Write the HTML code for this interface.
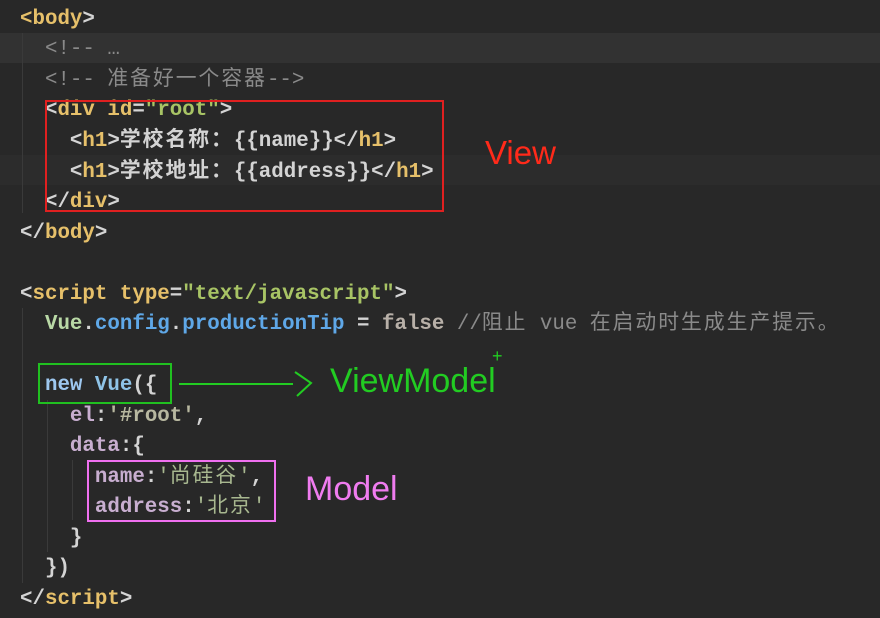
<!DOCTYPE html>
<html><head><meta charset="utf-8"><style>
html,body{margin:0;padding:0;background:#282828;width:880px;height:618px;overflow:hidden;position:relative}
.l{position:absolute;left:20px;height:30px;line-height:30px;white-space:pre;font-family:"Liberation Mono","Noto Sans CJK SC",monospace;font-size:20.8px;font-weight:bold;color:#d4d4d4}
.t{color:#e6c06a}.s{color:#a8c465}.c{color:#8a8a8a;font-weight:normal}.v{color:#b9d9a6}.b{color:#5fa8e8}.f{color:#b8b0a8}.p{color:#c8aed0}.cn{color:#a8b890;font-weight:normal}
.k{letter-spacing:2px}
.box{position:absolute;border:2px solid}
.lab{position:absolute;font-family:"Liberation Sans",sans-serif;font-size:34px}
.g{position:absolute;width:1px;background:#3a3a3a}
</style></head><body>
<div style="position:absolute;left:0;top:33px;width:880px;height:30px;background:#323232"></div>
<div style="position:absolute;left:0;top:155px;width:880px;height:30px;background:#2c2c2c"></div>
<div class="g" style="left:22px;top:33px;height:180px"></div>
<div class="g" style="left:22px;top:308px;height:275px"></div>
<div class="g" style="left:47px;top:400px;height:152px"></div>
<div class="g" style="left:72px;top:460px;height:60px"></div>
<div class="l" style="top:5px"><span class="t">&lt;</span><span class="t">body</span>&gt;</div>
<div class="l c" style="top:35px">  &lt;!-- …</div>
<div class="l c" style="top:66px">  &lt;!-- <span class="k">准备好一个容器</span>--&gt;</div>
<div class="l" style="top:96px">  &lt;<span class="t">div</span> <span class="t">id</span>=<span class="s">"root"</span>&gt;</div>
<div class="l" style="top:127px">    &lt;<span class="t">h1</span>&gt;<span class="k">学校名称：</span>{{name}}&lt;/<span class="t">h1</span>&gt;</div>
<div class="l" style="top:158px">    &lt;<span class="t">h1</span>&gt;<span class="k">学校地址：</span>{{address}}&lt;/<span class="t">h1</span>&gt;</div>
<div class="l" style="top:188px">  &lt;/<span class="t">div</span>&gt;</div>
<div class="l" style="top:219px">&lt;/<span class="t">body</span>&gt;</div>
<div class="l" style="top:280px">&lt;<span class="t">script</span> <span class="t">type</span>=<span class="s">"text/javascript"</span>&gt;</div>
<div class="l" style="top:310px">  <span class="v">Vue</span>.<span class="b">config</span>.<span class="b">productionTip</span> = <span class="f">false</span> <span class="c">//<span class="k">阻止</span> vue <span class="k">在启动时生成生产提示。</span></span></div>
<div class="l" style="top:371px">  <span class="b" style="color:#9ec8f0">new</span> <span class="v" style="color:#8fc4e8">Vue</span>({</div>
<div class="l" style="top:402px">    <span class="p">el</span>:<span class="s" style="color:#b8b8a0">'#root'</span>,</div>
<div class="l" style="top:432px">    <span class="p">data</span>:{</div>
<div class="l" style="top:463px">      <span class="p">name</span>:<span class="cn">'<span class="k">尚硅谷</span>'</span>,</div>
<div class="l" style="top:493px">      <span class="p">address</span>:<span class="cn">'<span class="k">北京</span>'</span></div>
<div class="l" style="top:524px">    }</div>
<div class="l" style="top:554px">  })</div>
<div class="l" style="top:585px">&lt;/<span class="t">script</span>&gt;</div>
<div class="box" style="left:45px;top:100px;width:395px;height:108px;border-color:#e02020"></div>
<div class="box" style="left:38px;top:363px;width:130px;height:37px;border-color:#20c020"></div>
<div class="box" style="left:87px;top:460px;width:185px;height:58px;border-color:#f070f0"></div>
<div class="lab" style="left:485px;top:134px;color:#ff2a1a;font-size:33px">View</div>
<div class="lab" style="left:330px;top:362px;color:#22cc22">ViewModel</div>
<div class="lab" style="left:492px;top:346px;color:#22cc22;font-size:18px">+</div>
<div class="lab" style="left:305px;top:470px;color:#f07cf0">Model</div>
<svg style="position:absolute;left:175px;top:368px" width="140" height="32"><path d="M4 16 L118 16 M120 4 L136 15 L122 28" stroke="#22cc22" stroke-width="2" fill="none"/></svg>
</body></html>
